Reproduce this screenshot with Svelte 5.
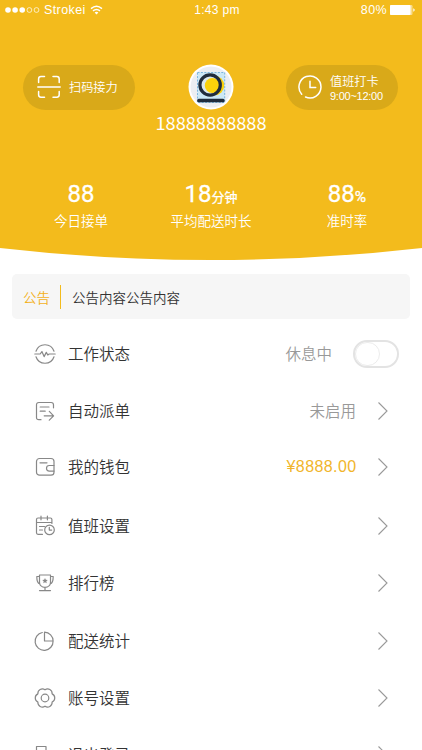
<script>
	let working = false;

	const stats = [
		{ value: '88', unit: '', label: '今日接单' },
		{ value: '18', unit: '分钟', label: '平均配送时长' },
		{ value: '88', unit: '%', label: '准时率' }
	];

	const groups = [
		[
			{ icon: 'status', title: '工作状态', note: '休息中', toggle: true },
			{ icon: 'dispatch', title: '自动派单', note: '未启用' },
			{ icon: 'wallet', title: '我的钱包', money: '¥8888.00' }
		],
		[
			{ icon: 'schedule', title: '值班设置' },
			{ icon: 'trophy', title: '排行榜' },
			{ icon: 'chart', title: '配送统计' },
			{ icon: 'gear', title: '账号设置' },
			{ icon: 'logout', title: '退出登录' }
		]
	];
</script>

<div class="page">
	<header>
		<div class="status-bar">
			<div class="carrier">
				<svg width="36" height="10" viewBox="0 0 36 10">
					<g fill="#fff">
						<circle cx="3" cy="5" r="2.8" />
						<circle cx="10.1" cy="5" r="2.8" />
						<circle cx="17.2" cy="5" r="2.8" />
					</g>
					<g fill="none" stroke="#fff" stroke-width=".7">
						<circle cx="24.4" cy="5" r="2.4" />
						<circle cx="31.5" cy="5" r="2.4" />
					</g>
				</svg>
				<span class="carrier-name">Strokei</span>
				<svg width="13" height="10" viewBox="0 0 13 10">
					<path d="M1 3.6Q6.5-1 12 3.6M3 5.8q3.5-2.8 7 0" fill="none" stroke="#fff" stroke-width="1.5" />
					<path d="M4.6 7.5q1.9-1.5 3.8 0L6.5 9.5z" fill="#fff" />
				</svg>
			</div>
			<span class="clock">1:43 pm</span>
			<div class="battery">
				<span>80%</span>
				<svg width="25" height="10" viewBox="0 0 25 10">
					<rect width="22.5" height="10" rx="1.2" fill="#fff" opacity=".5" />
					<rect width="20.5" height="10" rx="1" fill="#fff" />
					<path d="M23.3 3.2q1.4.5 1.4 1.8t-1.4 1.8z" fill="#fff" />
				</svg>
			</div>
		</div>

		<div class="profile">
			<div class="pill">
				<svg width="24" height="24" viewBox="0 0 24 24" fill="none" stroke="#fff" stroke-width="1.5" stroke-linecap="round">
					<path d="M1.6 7.5V4q0-2.4 2.4-2.4h3.5M16 1.6h3.8q2.4 0 2.4 2.4v3.5M22.2 16.5v3.3q0 2.4-2.4 2.4H16M7.5 22.2H4q-2.4 0-2.4-2.4v-3.3M.8 12h22.4" />
				</svg>
				<span>扫码接力</span>
			</div>
			<svg class="avatar" width="46" height="46" viewBox="0 0 46 46">
				<circle cx="23" cy="23" r="22.5" fill="#fff" />
				<circle cx="23" cy="23" r="20.5" fill="#eceef2" />
				<path d="M9.5 8.5h27.2v30H9.5z" fill="#cce8f6" stroke="#62a7d8" stroke-width=".8" stroke-dasharray="2 1.4" />
				<circle cx="26.4" cy="21.5" r="9.8" fill="#fbd20b" />
				<circle cx="22.1" cy="21" r="10" fill="#dbe8ed" />
				<circle cx="24.3" cy="21.5" r="7.5" fill="#fbd20b" />
				<circle cx="22.1" cy="21" r="10.2" fill="none" stroke="#202c3c" stroke-width="3.2" />
				<rect x="9.2" y="34.8" width="27.4" height="3.5" rx="1.5" fill="#202c3c" />
			</svg>
			<div class="pill duty">
				<svg width="24" height="24" viewBox="0 0 24 24" fill="none" stroke="#fff" stroke-width="1.5" stroke-linecap="round">
					<path d="M3.7 19.2A11 11 0 1 1 7.5 22M12 6.3V12.500h5.700" />
				</svg>
				<div>
					<p class="duty-title">值班打卡</p>
					<p class="hours">9:00~12:00</p>
				</div>
			</div>
		</div>
		<p class="phone">18888888888</p>

		<div class="stats">
			{#each stats as stat}
				<div class="stat">
					<p class="value">{stat.value}<small class:percent={stat.unit === '%'}>{stat.unit}</small></p>
					<p class="label">{stat.label}</p>
				</div>
			{/each}
		</div>
	</header>
	<svg class="curve" width="422" height="12" viewBox="0 0 422 12">
		<path d="M0 0Q211 24 422 0z" fill="#f3bb1c" />
	</svg>

	<div class="notice">
		<span class="tag">公告</span>
		<span class="text">公告内容公告内容</span>
	</div>

	{#each groups as group, i}
		<div class="group" class:compact={i === 0}>
			{#each group as item}
				<div class="row">
					<svg class="icon" width="22" height="22" viewBox="0 0 22 22">
						{#if item.icon === 'status'}
							<path d="M2 8.2a9.5 9.5 0 0 1 18 0M20 13.8a9.5 9.5 0 0 1-18 0M.8 11h5.4l1.7-2.4 2.2 5 2.2-4.2 1.5 2.6 1.4-1h6" />
						{:else if item.icon === 'dispatch'}
							<path d="M7 19.7H4.8q-2.3 0-2.3-2.3V4.8q0-2.3 2.3-2.3h12.4q2.3 0 2.3 2.3v3M6.2 7h8.8M6.2 11.2h5M10.2 15.8h9M15.3 11.4l4.3 4.4-4.3 4.4" />
						{:else if item.icon === 'wallet'}
							<rect x="2.5" y="2.5" width="17.5" height="16.7" rx="3" />
							<path d="M6 6.8h7M20 9.5h-4.7a2.8 2.8 0 0 0 0 5.6H20" />
						{:else if item.icon === 'schedule'}
							<path d="M8.5 19.3H4q-1.5 0-1.5-1.5V4.5Q2.5 3 4 3h12.4q1.5 0 1.5 1.5v4M2.5 7.5h15.4M7 1.2v3.6M13.4 1.2v3.6M5.5 11.5h5M5.5 15h3" />
							<circle cx="15.5" cy="14.9" r="4.8" />
							<path d="M15.3 12.3v2.8h2.4" />
						{:else if item.icon === 'trophy'}
							<path d="M5.5 3h11v7.3c0 3-2.3 5-5.5 5s-5.5-2-5.5-5zM5.5 4.5H2.8q0 6.8 2.9 7.2M16.5 4.5h2.7q0 6.8-2.9 7.2M11 15.5v3M5.5 18.6h11" />
							<path class="solid" d="M11 6l.8 1.8 2 .2-1.5 1.3.4 2L11 10.2l-1.7 1.1.4-2L8.2 8l2-.2z" />
						{:else if item.icon === 'chart'}
							<path d="M8.3 2.5a9 9 0 1 0 10.8 8.5H10.5V2.2a8.7 8.7 0 0 1 8.6 8.8" />
						{:else if item.icon === 'gear'}
							<path d="M11 2.8A4.5 4.5 0 0 1 18.1 6.9A4.5 4.5 0 0 1 18.1 15.1A4.5 4.5 0 0 1 11 19.2A4.5 4.5 0 0 1 3.9 15.1A4.5 4.5 0 0 1 3.9 6.9A4.5 4.5 0 0 1 11 2.8z" />
							<circle cx="11" cy="11" r="3.8" />
						{:else}
							<path d="M12 7V2.5H2.5v17H12V15M7 11h12M16 8l3 3-3 3" />
						{/if}
					</svg>
					<span class="title">{item.title}</span>
					{#if item.note}
						<span class="note">{item.note}</span>
					{/if}
					{#if item.money}
						<span class="money">{item.money}</span>
					{/if}
					{#if item.toggle}
						<button class="switch" class:on={working} aria-label={item.title} on:click={() => (working = !working)}>
							<i></i>
						</button>
					{:else}
						<svg class="arrow" width="12" height="20" viewBox="0 0 12 20">
							<path d="M1.5 1.5L10 10l-8.5 8.5" />
						</svg>
					{/if}
				</div>
			{/each}
		</div>
	{/each}
</div>

<style>
:global(body) {
  margin: 0;
  overflow: hidden;
}
.page {
  width: 422px;
  height: 750px;
  overflow: hidden;
  background: #fff;
  font-family: "Noto Sans CJK SC", sans-serif;
  font-weight: 350;
  color: #333;
}
p {
  margin: 0;
}
svg {
  display: block;
  flex-shrink: 0;
}
header {
  height: 248px;
  background: #f3bb1c;
  color: #fff;
}
.status-bar {
  display: grid;
  grid-template-columns: 1fr auto 1fr;
  align-items: center;
  height: 20px;
  padding: 0 7px 0 5px;
  font: 12.5px/20px "Liberation Sans", sans-serif;
  letter-spacing: 0.4px;
}
.carrier,
.battery {
  display: flex;
  align-items: center;
}
.carrier-name {
  margin: 0 4px 0 3px;
}
.clock {
  padding-left: 14px;
  font-size: 12px;
  letter-spacing: 0.3px;
}
.battery {
  justify-content: flex-end;
  gap: 3px;
}
.profile {
  display: flex;
  justify-content: space-between;
  align-items: center;
  height: 46px;
  margin-top: 44px;
  padding: 0 24px 0 23px;
}
.pill {
  display: flex;
  align-items: center;
  box-sizing: border-box;
  width: 112px;
  height: 45px;
  padding-left: 14px;
  gap: 8px;
  border-radius: 23px;
  background: #d9a919;
  font-size: 12.2px;
  line-height: 17px;
}
.duty {
  padding-left: 12px;
}
.duty-title {
  padding-top: 1px;
}
.hours {
  font: 11px/13px "Liberation Sans", sans-serif;
  letter-spacing: -0.25px;
}
.phone {
  height: 24px;
  font-size: 18.2px;
  line-height: 24px;
  font-weight: 400;
  text-align: center;
}
.stats {
  display: grid;
  grid-template-columns: 130px 130px 142px;
  margin-top: 44px;
  padding-left: 16px;
  text-align: center;
}
.value {
  height: 31px;
  font: 400 24px/32px Roboto, "Noto Sans CJK SC", sans-serif;
  -webkit-text-stroke: 0.3px #fff;
}
.value small {
  font-size: 13px;
}
.value .percent {
  font-size: 15.5px;
}
.label {
  font-size: 13.5px;
  line-height: 22px;
}
.notice {
  display: flex;
  align-items: center;
  height: 45px;
  margin: 14px 12px 7px;
  padding-left: 11px;
  border-radius: 5px;
  background: #f6f6f6;
  font-size: 13.5px;
}
.tag {
  padding-right: 10px;
  border-right: 1px solid #f3bb1c;
  line-height: 24px;
  color: #f3b11c;
}
.text {
  padding-left: 11px;
}
.row {
  display: flex;
  align-items: center;
  height: 57.3px;
  padding: 0 33px 0 34px;
}
.compact {
  padding-bottom: 2px;
}
.compact .row {
  height: 56.5px;
}
.icon {
  fill: none;
  stroke: #888;
  stroke-width: 1.2;
  stroke-linecap: round;
  stroke-linejoin: round;
}
.icon .solid {
  fill: #888;
  stroke: none;
}
.title {
  flex: 1;
  padding-left: 12px;
  font-size: 15.5px;
}
.title,
.note {
  margin-bottom: 2px;
}
.note {
  color: #999;
  font-size: 15.5px;
}
.money {
  margin-right: -0.5px;
  color: #f1b52b;
  font: 300 16px "Liberation Sans", sans-serif;
  letter-spacing: 0.4px;
}
.arrow {
  margin-left: 21px;
  fill: none;
  stroke: #999;
  stroke-width: 1.1;
}
.switch {
  display: flex;
  box-sizing: border-box;
  width: 46px;
  height: 28px;
  margin: 0 -10px 0 21px;
  padding: 0;
  border: 2px solid #e3e3e3;
  border-radius: 14px;
  background: #fff;
}
.switch i {
  box-sizing: border-box;
  width: 25px;
  height: 24px;
  border: 1px solid #ececec;
  border-radius: 12px;
}
.switch.on {
  justify-content: flex-end;
  background: #f3bb1c;
}
</style>
